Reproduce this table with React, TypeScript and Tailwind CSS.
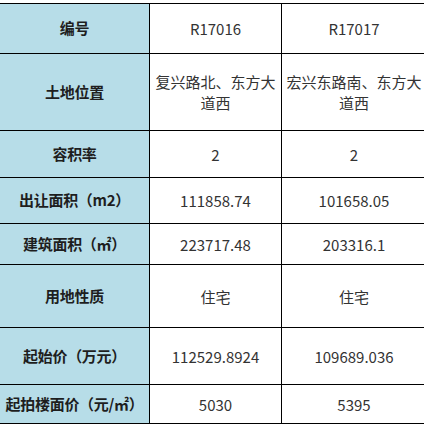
import React from "react";

const rows: { label: string; a: string[]; b: string[]; h: string }[] = [
  { label: "编号", a: ["R17016"], b: ["R17017"], h: "h-[50px]" },
  { label: "土地位置", a: ["复兴路北、东方大", "道西"], b: ["宏兴东路南、东方大", "道西"], h: "h-[77px]" },
  { label: "容积率", a: ["2"], b: ["2"], h: "h-[47px]" },
  { label: "出让面积（m2）", a: ["111858.74"], b: ["101658.05"], h: "h-[46px]" },
  { label: "建筑面积（㎡）", a: ["223717.48"], b: ["203316.1"], h: "h-[41px]" },
  { label: "用地性质", a: ["住宅"], b: ["住宅"], h: "h-[63px]" },
  { label: "起始价（万元）", a: ["112529.8924"], b: ["109689.036"], h: "h-[57px]" },
  { label: "起拍楼面价（元/㎡）", a: ["5030"], b: ["5395"], h: "h-[39px]" },
];

export default function App() {
  return (
    <div
      className="w-[424px] h-[426px] overflow-hidden bg-white pt-[3px]"
      style={{ fontFamily: '"Noto Sans CJK SC", "Noto Sans", sans-serif' }}
    >
      <div className="w-[440px] border-t border-black">
        {rows.map((r, i) => (
          <div key={i} className={`flex ${r.h} border-b border-black`}>
            <div className="w-[150px] shrink-0 bg-[#b7dde8] border-r border-black flex items-center justify-center text-[15px] font-bold text-[#1e1e1e] whitespace-nowrap tracking-[-0.3px]">
              {r.label}
            </div>
            <div className="w-[132px] shrink-0 border-r border-black flex flex-col items-center justify-center text-[15px] leading-[21px] text-[#333]">
              {r.a.map((t, j) => (
                <span key={j} className="whitespace-nowrap text-center">{t}</span>
              ))}
            </div>
            <div className="w-[144px] shrink-0 flex flex-col items-center justify-center text-[15px] leading-[21px] text-[#333]">
              {r.b.map((t, j) => (
                <span key={j} className="whitespace-nowrap text-center">{t}</span>
              ))}
            </div>
          </div>
        ))}
      </div>
    </div>
  );
}
